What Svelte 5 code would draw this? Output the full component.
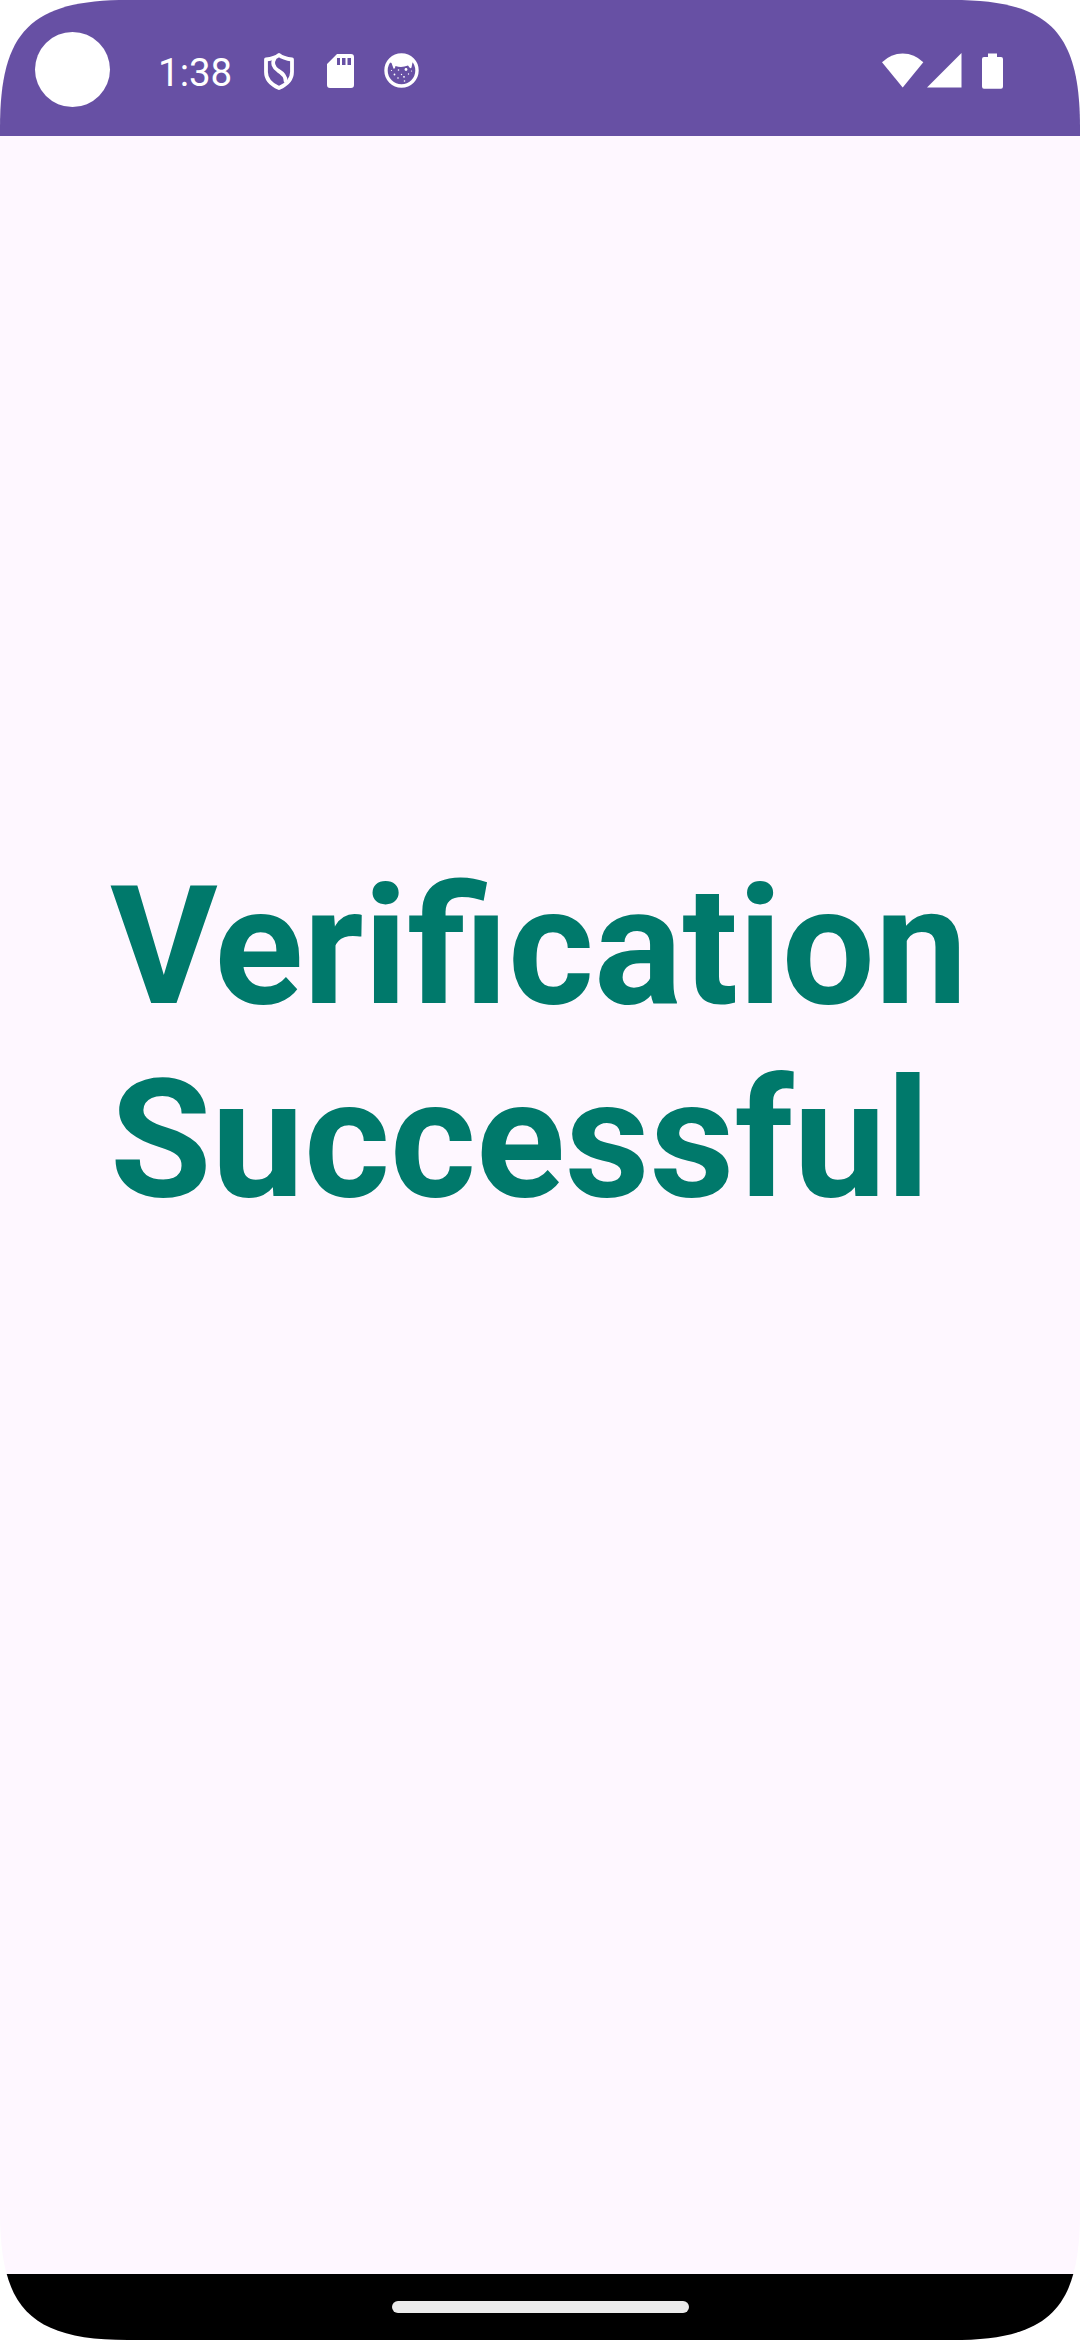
<script>
  const time = '1:38';
  const message = 'Verification Successful';
</script>

<div class="screen">
  <header class="status">
    <div class="camera"></div>
    <span class="time">{time}</span>
    <div class="notifications">
      <svg class="shield" width="32" height="38" viewBox="0 0 32 38" fill="none" stroke="#fff" stroke-width="3.800" stroke-linejoin="round" stroke-linecap="round">
        <path d="M16 2 C12.500 4.800 7 6 3 6.500 V19 C3 26.500 9 32 16 35 C23 32 29 26.500 29 19 V6.500 C25 6 19.500 4.800 16 2Z" />
        <path stroke-width="3.800" d="M11.800 5 C8.500 10 10.500 14.500 15 17.500 C20 20.500 22.800 23.500 22.500 28" />
      </svg>
      <svg class="card" width="27" height="34" viewBox="0 0 27 34">
        <path fill="#fff" fill-rule="evenodd" d="M10 0 H24 Q27 0 27 3 V31 Q27 34 24 34 H3 Q0 34 0 31 V10Z M10 4 V11 H13 V4Z M15 4 V11 H18.500 V4Z M20.500 4 V11 H24 V4Z" />
      </svg>
      <svg width="35" height="35" viewBox="0 0 35 35">
        <circle cx="17.500" cy="17.500" r="15.500" fill="none" stroke="#fff" stroke-width="3.400" />
        <path fill="#fff" d="M5 9 Q17.500 -5 30 9 L28.500 9.500 L27.500 14.500 Q26.500 16 25.500 14.500 L24 12.500 Q17.500 15 11.500 13 Q11 16.500 9.500 15.500 L7.500 10Z" />
        <g fill="#fff">
          <circle cx="22" cy="16.500" r="1.400" />
          <circle cx="14.500" cy="17" r=".8" />
          <circle cx="10.500" cy="21.500" r=".9" />
          <circle cx="17.500" cy="21.500" r=".7" />
          <circle cx="24.500" cy="21" r=".7" />
          <circle cx="14" cy="25" r=".8" />
          <circle cx="20" cy="23.800" r=".9" />
          <circle cx="20.500" cy="28" r=".8" />
          <circle cx="27.500" cy="18" r=".6" />
          <circle cx="7.500" cy="17.500" r=".6" />
        </g>
      </svg>
    </div>
    <div class="system">
      <svg width="42" height="35" viewBox="0 0 42 35"><path fill="#fff" d="M0 9.300 Q9 .5 20.700 .5 Q32.500 .5 41.300 9.300 L20.700 34.500Z" /></svg>
      <svg class="signal" width="35" height="35" viewBox="0 0 35 35"><path fill="#fff" d="M34.500 0 V34.500 H0Z" /></svg>
      <svg class="battery" width="21" height="36" viewBox="0 0 21 36"><path fill="#fff" d="M6 .5 H15 V4 H19 Q21 4 21 6 V33.500 Q21 35.700 19 35.700 H2 Q0 35.700 0 33.500 V6 Q0 4 2 4 H6Z" /></svg>
    </div>
  </header>
  <main>
    <h1>{message}</h1>
  </main>
  <nav><div class="handle"></div></nav>
</div>

<style>
  :global(body) {
    margin: 0;
    background: #fff;
  }
  .screen {
    width: 1080px;
    height: 2340px;
    display: flex;
    flex-direction: column;
    background: #fef7ff;
    font-family: Roboto, sans-serif;
    clip-path: path('M0 128 C0 31 31 0 128 0 H952 C1049 0 1080 31 1080 128 V2212 C1080 2309 1049 2340 952 2340 H128 C31 2340 0 2309 0 2212Z');
  }
  .status {
    box-sizing: border-box;
    height: 136px;
    padding: 0 77px 0 35px;
    display: flex;
    align-items: flex-start;
    background: #6750a4;
    color: #fff;
  }
  svg {
    display: block;
    flex: none;
  }
  .camera {
    width: 75px;
    height: 75px;
    margin-top: 32px;
    border-radius: 50%;
    background: #fff;
  }
  .time {
    width: 75px;
    margin: 50px 0 0 48px;
    font-size: 38.5px;
    line-height: 46px;
    white-space: nowrap;
  }
  .notifications {
    display: flex;
    align-items: flex-start;
    margin: 53px 0 0 30px;
  }
  .card {
    margin: 1px 30px 0 32px;
  }
  .system {
    display: flex;
    align-items: flex-start;
    margin: 53px 0 0 auto;
  }
  .signal {
    margin: 0 20px 0 3px;
  }
  main {
    flex: 1;
    padding: 714px 110px 0;
  }
  h1 {
    margin: 0;
    font-size: 165px;
    line-height: 193px;
    font-weight: 700;
    color: #00796b;
  }
  nav {
    height: 66px;
    display: flex;
    align-items: center;
    justify-content: center;
    background: #000;
  }
  .handle {
    width: 297px;
    height: 11.5px;
    border-radius: 6px;
    background: #ebebeb;
  }
</style>
